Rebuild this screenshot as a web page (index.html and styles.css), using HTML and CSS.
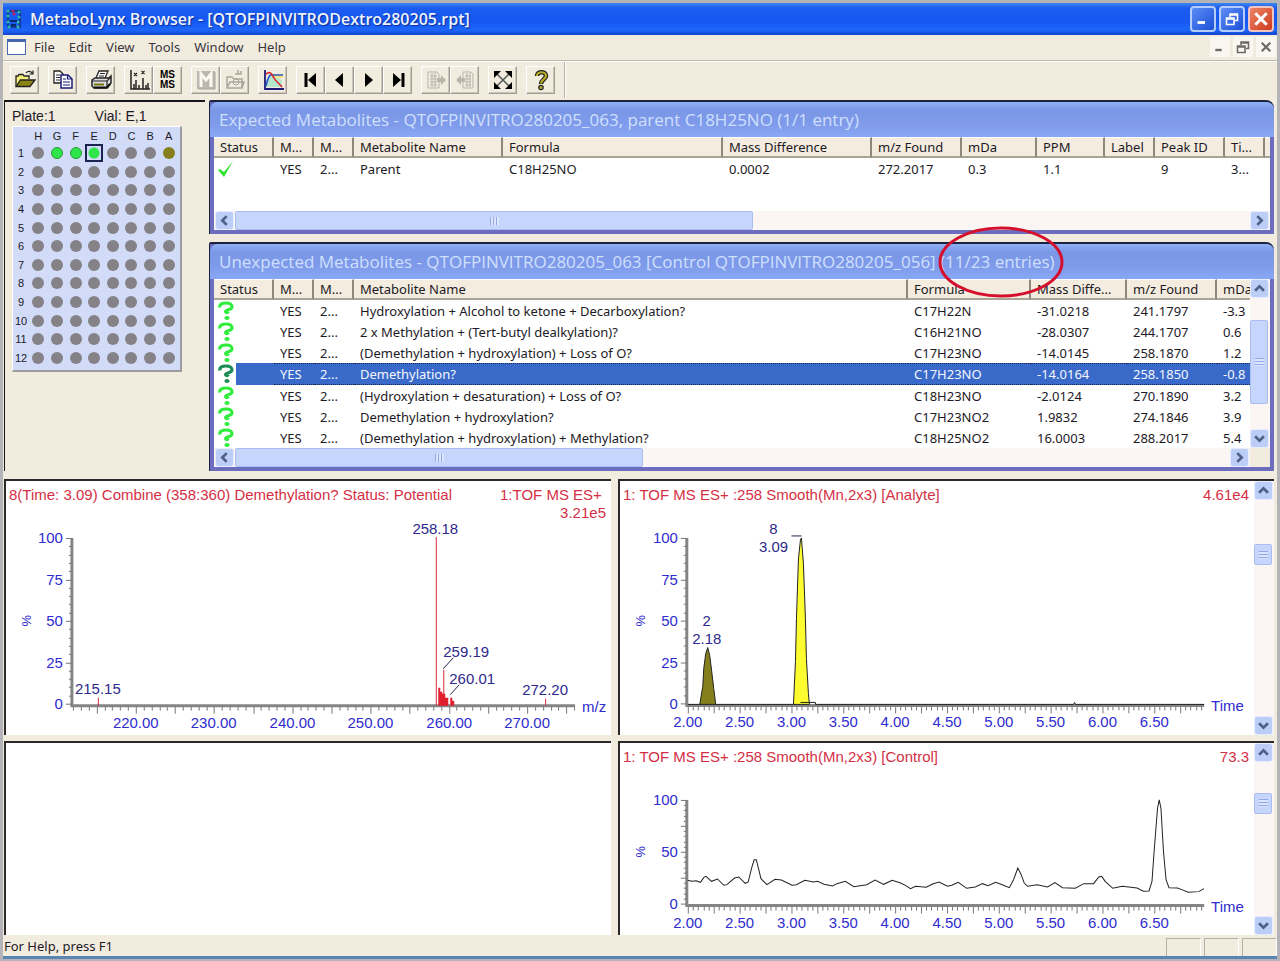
FILE: index.html
```html
<!DOCTYPE html>
<html lang="en">
<head>
    <meta charset="UTF-8">
    <meta name="viewport" content="width=device-width, initial-scale=1.0">
    <title>MetaboLynx Browser</title>
    <link rel="stylesheet" href="styles.css">
</head>
<body>
    <!-- shared symbols -->
    <svg class="symbols" width="0" height="0" aria-hidden="true">
        <symbol id="left" viewBox="0 0 10 10"><path d="M7 1L3 5L7 9" fill="none" stroke="#4d6185" stroke-width="2.4"/></symbol>
        <symbol id="right" viewBox="0 0 10 10"><path d="M3 1L7 5L3 9" fill="none" stroke="#4d6185" stroke-width="2.4"/></symbol>
        <symbol id="up" viewBox="0 0 10 10"><path d="M1 7L5 3L9 7" fill="none" stroke="#4d6185" stroke-width="2.4"/></symbol>
        <symbol id="down" viewBox="0 0 10 10"><path d="M1 3L5 7L9 3" fill="none" stroke="#4d6185" stroke-width="2.4"/></symbol>
        <symbol id="query" viewBox="0 0 18 20"><path d="M2.800 6.500C2.500 3 5.500 2 9 2C12.500 2 15 3.500 15 6C15 9 9 8.500 8.500 10.500C8.500 12 11 11.500 11.500 12.500" fill="none" stroke="currentColor" stroke-width="3.200"/><ellipse cx="10" cy="17" rx="2.600" ry="2" fill="currentColor"/></symbol>
        <symbol id="restore" viewBox="0 0 14 14"><path d="M5 5V2H12.500V8.500H10M5 3H12" fill="none" stroke="currentColor" stroke-width="1.600"/><path d="M1.500 6H9V12.500H1.500ZM1.500 7H9" fill="none" stroke="currentColor" stroke-width="1.600"/></symbol>
        <symbol id="close" viewBox="0 0 14 14"><path d="M2 2L12 12M12 2L2 12" stroke="currentColor" stroke-width="2.600"/></symbol>
        <symbol id="minimize" viewBox="0 0 14 14"><path d="M1.500 10.500H9" stroke="currentColor" stroke-width="2.800"/></symbol>
    </svg>

    <div class="window">
        <header class="titlebar">
            <svg class="app-icon" width="16" height="20" viewBox="0 0 16 20" aria-hidden="true">
                <path d="M2 2H14V18H2Z" fill="none" stroke="#123a8c" stroke-width="2"/>
                <g fill="#2bb8a6"><circle cx="2" cy="2" r="1.600"/><circle cx="2" cy="7" r="1.600"/><circle cx="2" cy="13" r="1.600"/><circle cx="3" cy="18" r="1.600"/><circle cx="13" cy="3" r="1.600"/><circle cx="13" cy="8" r="1.600"/><circle cx="12" cy="13" r="1.600"/><circle cx="12" cy="18" r="1.600"/></g>
                <g fill="#b02a55"><circle cx="7" cy="2" r="1.500"/><circle cx="8" cy="5" r="1.500"/></g>
                <path d="M4 12H11M5 16H10" stroke="#062a66" stroke-width="2"/>
            </svg>
            <h1>MetaboLynx Browser - [QTOFPINVITRODextro280205.rpt]</h1>
            <div class="window-buttons">
                <button type="button" aria-label="Minimize"><svg width="14" height="14"><use href="#minimize"/></svg></button>
                <button type="button" aria-label="Restore"><svg width="14" height="14"><use href="#restore"/></svg></button>
                <button type="button" class="close" aria-label="Close"><svg width="16" height="16"><use href="#close"/></svg></button>
            </div>
        </header>

        <nav class="menubar">
            <span class="doc-icon"></span>
            <button type="button">File</button>
            <button type="button">Edit</button>
            <button type="button">View</button>
            <button type="button">Tools</button>
            <button type="button">Window</button>
            <button type="button">Help</button>
            <div class="child-buttons">
                <button type="button" aria-label="Minimize child"><svg width="12" height="12"><use href="#minimize"/></svg></button>
                <button type="button" aria-label="Restore child"><svg width="14" height="14"><use href="#restore"/></svg></button>
                <button type="button" aria-label="Close child"><svg width="12" height="12"><use href="#close"/></svg></button>
            </div>
        </nav>

        <div class="toolbar">
            <div class="group">
                <button type="button" aria-label="Open">
                    <svg viewBox="0 0 22 22"><path d="M2 17V7H4L5 5.500H9L10 7H15V10" fill="#f4ef7a" stroke="#222" stroke-width="1.300"/><path d="M2 17.500L6.500 11H21L16 17.500Z" fill="#8a8412" stroke="#222" stroke-width="1.300"/><path d="M12 4C14 1.500 17 2 18.500 4.500M19 1.500V5H15.500" fill="none" stroke="#222" stroke-width="1.200"/></svg>
                </button>
            </div>
            <div class="group">
                <button type="button" aria-label="Copy">
                    <svg viewBox="0 0 22 22"><path d="M2 2H8L11 5V14H2Z" fill="#fff" stroke="#222" stroke-width="1.300"/><path d="M4 6H8M4 8.500H8M4 11H8" stroke="#333"/><path d="M9 6H16L20 10V19H9Z" fill="#fff" stroke="#1c1c78" stroke-width="1.500"/><path d="M15.500 6V10H20M11 10H14M11 13H18M11 16H18" fill="none" stroke="#1c1c78" stroke-width="1.200"/></svg>
                </button>
            </div>
            <div class="group">
                <button type="button" aria-label="Print">
                    <svg viewBox="0 0 22 22"><path d="M6 9L9 2H18L15 9" fill="#fff" stroke="#222" stroke-width="1.300"/><path d="M10 4.500H15M9 7H14" stroke="#222"/><path d="M2 11L5 9H19L21 7V14L17 19H4L2 17Z" fill="#ddd" stroke="#222" stroke-width="1.500"/><path d="M2 12H17L21 8M17 12V18" fill="none" stroke="#222" stroke-width="1.200"/><path d="M4 15.500H14" stroke="#777408" stroke-width="2"/><path d="M4 18.500H17L20 15" fill="none" stroke="#111" stroke-width="2"/></svg>
                </button>
            </div>
            <div class="group">
                <button type="button" aria-label="Spectrum">
                    <svg viewBox="0 0 22 22"><path d="M3 1V20H22M6 20V15M8 20V11M11 20V16M15 20V9M18 20V16M20 20V14" fill="none" stroke="#222" stroke-width="1.500"/><path d="M6 4L9 7M9 4L6 7M13.500 2L16.500 5M16.500 2L13.500 5" stroke="#222" stroke-width="1.100"/></svg>
                </button>
                <button type="button" aria-label="MS MS" class="msms"><span>MS</span><span>MS</span></button>
            </div>
            <div class="group">
                <button type="button" aria-label="MassLynx" disabled>
                    <svg viewBox="0 0 22 22"><path d="M2 2H20V20H2Z" fill="#bdb8ae"/><path d="M6 18V5L11 11L16 5V18" fill="none" stroke="#fbf8f2" stroke-width="3"/><path d="M3 20H20V3" fill="none" stroke="#aaa69c"/></svg>
                </button>
                <button type="button" aria-label="Open result" disabled>
                    <svg viewBox="0 0 22 22"><path d="M3 19V8H8L10 10H18V19ZM3 19L6 13H20L18 19M11 5H17V2M14 5V1" fill="none" stroke="#aaa69c" stroke-width="1.500"/><circle cx="12" cy="13" r="3" fill="none" stroke="#aaa69c"/></svg>
                </button>
            </div>
            <div class="group">
                <button type="button" aria-label="Chromatogram">
                    <svg viewBox="0 0 22 22"><path d="M3 12L9 6L20 11V18H3Z" fill="#b6e8d0"/><path d="M11 5H21V9H13Z" fill="#f1e780"/><path d="M3 1V20H22" fill="none" stroke="#1c1c78" stroke-width="1.800"/><path d="M4 17C7 5 8 5 12 6H21" fill="none" stroke="#2d55c8" stroke-width="1.600"/><path d="M4 5C8 2 9 4 12 9C14 13 18 15 20 18" fill="none" stroke="#d8262c" stroke-width="1.600"/></svg>
                </button>
            </div>
            <div class="group">
                <button type="button" aria-label="First"><svg viewBox="0 0 22 22"><path d="M6 4V18" stroke="#000" stroke-width="3"/><path d="M16 4V18L8 11Z"/></svg></button>
                <button type="button" aria-label="Previous"><svg viewBox="0 0 22 22"><path d="M14 4V18L6 11Z"/></svg></button>
                <button type="button" aria-label="Next"><svg viewBox="0 0 22 22"><path d="M7 4V18L15 11Z"/></svg></button>
                <button type="button" aria-label="Last"><svg viewBox="0 0 22 22"><path d="M16 4V18" stroke="#000" stroke-width="3"/><path d="M6 4V18L14 11Z"/></svg></button>
            </div>
            <div class="group">
                <button type="button" aria-label="Export list" disabled>
                    <svg viewBox="0 0 22 22"><path d="M3 3H12L14 5V19H3ZM5 7H12M5 10H12M5 13H12M5 16H12M7 4V18M10 4V18" fill="none" stroke="#b9b5aa"/><path d="M12 9H16V6L21 11L16 16V13H12Z" fill="#b9b5aa"/></svg>
                </button>
                <button type="button" aria-label="Import list" disabled>
                    <svg viewBox="0 0 22 22"><path d="M9 3H17L19 5V19H9ZM11 7H17M11 10H17M11 13H17M11 16H17M13 4V18M16 4V18" fill="none" stroke="#b9b5aa"/><path d="M11 9H7V6L2 11L7 16V13H11Z" fill="#b9b5aa"/></svg>
                </button>
            </div>
            <div class="group">
                <button type="button" aria-label="Full extent">
                    <svg viewBox="0 0 22 22"><path d="M4 4L18 18M18 4L4 18" stroke="#555" stroke-width="1.500"/><path d="M2 2H9L2 9ZM20 2H13L20 9ZM2 20H9L2 13ZM20 20H13L20 13Z"/></svg>
                </button>
            </div>
            <div class="group">
                <button type="button" aria-label="Help topics">
                    <svg viewBox="0 0 22 22"><path d="M7 7C7 2 16 2 16 7C16 10 11 11 11 15" fill="none" stroke="#222" stroke-width="4.600"/><path d="M7 7C7 2 16 2 16 7C16 10 11 11 11 14.500" fill="none" stroke="#b9ad28" stroke-width="2.200"/><circle cx="11" cy="18.500" r="2.200" fill="#b9ad28" stroke="#222" stroke-width="1.200"/></svg>
                </button>
            </div>
            <span class="divider"></span>
        </div>

        <main>
            <section class="top">
                <aside class="plate-panel">
                    <p class="plate-info"><span>Plate:1</span><span>Vial: E,1</span></p>
                    <div class="plate" id="plate"></div>
                </aside>

                <div class="lists">
                    <section class="list-panel">
                        <h2>Expected Metabolites - QTOFPINVITRO280205_063, parent C18H25NO (1/1 entry)</h2>
                        <div class="list expected">
                            <table>
                                <colgroup><col class="w-status"><col class="w-m"><col class="w-m"><col class="w-name"><col class="w-formula"><col class="w-diff"><col class="w-found"><col class="w-mda"><col class="w-ppm"><col class="w-label"><col class="w-peak"><col class="w-time"><col></colgroup>
                                <thead>
                                    <tr><th>Status</th><th>M...</th><th>M...</th><th>Metabolite Name</th><th>Formula</th><th>Mass Difference</th><th>m/z Found</th><th>mDa</th><th>PPM</th><th>Label</th><th>Peak ID</th><th>Ti...</th><th></th></tr>
                                </thead>
                                <tbody>
                                    <tr><td class="status"><svg width="20" height="20" viewBox="0 0 20 20"><path d="M1 11L3 10L7 13L16 2L7 18Z" fill="#2ee22e"/></svg></td><td>YES</td><td>2...</td><td>Parent</td><td>C18H25NO</td><td>0.0002</td><td>272.2017</td><td>0.3</td><td>1.1</td><td></td><td>9</td><td>3...</td><td></td></tr>
                                </tbody>
                            </table>
                        </div>
                        <div class="hscroll">
                            <button type="button" aria-label="Scroll left"><svg width="11" height="11"><use href="#left"/></svg></button>
                            <div class="track"><div class="thumb" style="width: 51%"></div></div>
                            <button type="button" aria-label="Scroll right"><svg width="11" height="11"><use href="#right"/></svg></button>
                        </div>
                    </section>

                    <section class="list-panel">
                        <h2>Unexpected Metabolites - QTOFPINVITRO280205_063 [Control QTOFPINVITRO280205_056] <span class="marked">(11/23 entries)<svg class="ring" width="126" height="74" viewBox="0 0 126 74" aria-hidden="true"><ellipse cx="63" cy="37" rx="61" ry="34" fill="none" stroke="#d4102c" stroke-width="3"/></svg></span></h2>
                        <div class="list-row">
                            <div class="list">
                                <table>
                                    <colgroup><col class="w-status"><col class="w-m"><col class="w-m"><col><col class="w-formula2"><col class="w-diff2"><col class="w-found"><col class="w-mda2"></colgroup>
                                    <thead>
                                        <tr><th>Status</th><th>M...</th><th>M...</th><th>Metabolite Name</th><th>Formula</th><th>Mass Diffe...</th><th>m/z Found</th><th>mDa</th></tr>
                                    </thead>
                                    <tbody>
                                        <tr><td class="status"><svg width="18" height="20"><use href="#query"/></svg></td><td>YES</td><td>2...</td><td>Hydroxylation + Alcohol to ketone + Decarboxylation?</td><td>C17H22N</td><td>-31.0218</td><td>241.1797</td><td>-3.3</td></tr>
                                        <tr><td class="status"><svg width="18" height="20"><use href="#query"/></svg></td><td>YES</td><td>2...</td><td>2 x Methylation + (Tert-butyl dealkylation)?</td><td>C16H21NO</td><td>-28.0307</td><td>244.1707</td><td>0.6</td></tr>
                                        <tr><td class="status"><svg width="18" height="20"><use href="#query"/></svg></td><td>YES</td><td>2...</td><td>(Demethylation + hydroxylation) + Loss of O?</td><td>C17H23NO</td><td>-14.0145</td><td>258.1870</td><td>1.2</td></tr>
                                        <tr class="selected"><td class="status"><svg width="18" height="20"><use href="#query"/></svg></td><td>YES</td><td>2...</td><td>Demethylation?</td><td>C17H23NO</td><td>-14.0164</td><td>258.1850</td><td>-0.8</td></tr>
                                        <tr><td class="status"><svg width="18" height="20"><use href="#query"/></svg></td><td>YES</td><td>2...</td><td>(Hydroxylation + desaturation) + Loss of O?</td><td>C18H23NO</td><td>-2.0124</td><td>270.1890</td><td>3.2</td></tr>
                                        <tr><td class="status"><svg width="18" height="20"><use href="#query"/></svg></td><td>YES</td><td>2...</td><td>Demethylation + hydroxylation?</td><td>C17H23NO2</td><td>1.9832</td><td>274.1846</td><td>3.9</td></tr>
                                        <tr><td class="status"><svg width="18" height="20"><use href="#query"/></svg></td><td>YES</td><td>2...</td><td>(Demethylation + hydroxylation) + Methylation?</td><td>C18H25NO2</td><td>16.0003</td><td>288.2017</td><td>5.4</td></tr>
                                    </tbody>
                                </table>
                            </div>
                            <div class="vscroll">
                                <button type="button" aria-label="Scroll up"><svg width="11" height="11"><use href="#up"/></svg></button>
                                <div class="track"><div class="thumb" style="height: 64%; margin-top: 22px"></div></div>
                                <button type="button" aria-label="Scroll down"><svg width="11" height="11"><use href="#down"/></svg></button>
                            </div>
                        </div>
                        <div class="hscroll with-corner">
                            <button type="button" aria-label="Scroll left"><svg width="11" height="11"><use href="#left"/></svg></button>
                            <div class="track"><div class="thumb" style="width: 41%"></div></div>
                            <button type="button" aria-label="Scroll right"><svg width="11" height="11"><use href="#right"/></svg></button>
                        </div>
                    </section>
                </div>
            </section>

            <section class="plots">
                <section class="plot">
                    <div class="plot-body">
                        <div class="plot-head">
                            <span>8(Time: 3.09) Combine (358:360) Demethylation? Status: Potential</span>
                            <span class="scale"><span>1:TOF MS ES+&nbsp;</span><span>3.21e5</span></span>
                        </div>
                        <svg class="chart" id="spectrum" viewBox="0 0 606 214">
                            <g class="peaks">
                                <path d="M92.500 179V187M431 18V187M438.500 151V187M540.500 180V187"/>
                                <path d="M433 187V169H435V173H437V175H440V179H443V187ZM445 187V179H447V182H449V187Z" class="solid"/>
                            </g>
                            <path class="leader" d="M438 150L448 139M445 176L454 166"/>
                            <g class="peak-labels">
                                <text x="430" y="15" text-anchor="middle">258.18</text>
                                <text x="438" y="138">259.19</text>
                                <text x="444" y="165">260.01</text>
                                <text x="540" y="176" text-anchor="middle">272.20</text>
                                <text x="92" y="175" text-anchor="middle">215.15</text>
                            </g>
                        </svg>
                    </div>
                </section>

                <section class="plot">
                    <div class="plot-body">
                        <div class="plot-head">
                            <span>1: TOF MS ES+ :258 Smooth(Mn,2x3) [Analyte]</span>
                            <span class="scale">4.61e4</span>
                        </div>
                        <svg class="chart" id="analyte" viewBox="0 0 636 214">
                            <path class="olive" d="M80 186L83 168L84 150L86 135L88 129L90 137L92 153L94 170L96 186Z"/>
                            <path class="yellow" d="M174 186L176 143L177 100L179 40L181 21L182 19L184 45L186 100L187 140L189 175L190 186Z"/>
                            <path class="trace" d="M68 186H80M96 186H174M181 184H196V186H455L456 184L457 186H586"/>
                            <path class="leader" d="M172 17H182"/>
                            <g class="peak-labels">
                                <text x="154" y="15" text-anchor="middle">8</text>
                                <text x="154" y="33" text-anchor="middle">3.09</text>
                                <text x="87" y="107" text-anchor="middle">2</text>
                                <text x="87" y="125" text-anchor="middle">2.18</text>
                            </g>
                        </svg>
                    </div>
                    <div class="vscroll">
                        <button type="button" aria-label="Scroll up"><svg width="11" height="11"><use href="#up"/></svg></button>
                        <div class="track"><div class="thumb small" style="margin-top: 44px"></div></div>
                        <button type="button" aria-label="Scroll down"><svg width="11" height="11"><use href="#down"/></svg></button>
                    </div>
                </section>

                <section class="plot"></section>

                <section class="plot">
                    <div class="plot-body">
                        <div class="plot-head">
                            <span>1: TOF MS ES+ :258 Smooth(Mn,2x3) [Control]</span>
                            <span class="scale">73.3</span>
                        </div>
                        <svg class="chart" id="control" viewBox="0 0 636 153">
                            <g transform="translate(-9 -46) scale(.4273 .3333)">
                                <polyline class="trace" vector-effect="non-scaling-stroke" points="180,437 190,440 200,438 210,443 218,428 223,425 236,440 250,433 265,452 272,450 290,430 300,427 315,446 322,442 330,400 336,375 341,375 346,400 352,432 366,450 385,434 400,436 425,452 435,450 455,437 475,442 485,440 500,449 520,454 530,447 550,440 570,456 600,450 620,436 640,449 660,437 680,445 692,453 703,462 715,455 740,458 755,448 770,442 790,455 800,452 815,443 835,461 855,457 872,447 885,453 903,443 920,451 935,459 945,435 955,400 963,420 970,445 978,455 1000,450 1025,457 1042,444 1060,459 1090,461 1110,447 1133,447 1145,427 1152,425 1160,440 1178,461 1200,455 1235,460 1250,470 1263,469 1270,440 1275,350 1283,220 1287,195 1291,220 1297,350 1303,435 1310,459 1330,460 1340,465 1355,473 1380,471 1392,462"/>
                            </g>
                        </svg>
                    </div>
                    <div class="vscroll">
                        <button type="button" aria-label="Scroll up"><svg width="11" height="11"><use href="#up"/></svg></button>
                        <div class="track"><div class="thumb small" style="margin-top: 31px"></div></div>
                        <button type="button" aria-label="Scroll down"><svg width="11" height="11"><use href="#down"/></svg></button>
                    </div>
                </section>
            </section>
        </main>

        <footer class="statusbar">
            <span>For Help, press F1</span>
            <div class="panes"><i></i><i></i><i></i></div>
        </footer>
    </div>

    <script src="script.js"></script>
</body>
</html>
```
FILE: styles.css
```css
* {
    box-sizing: border-box;
}

body {
    margin: 0;
    background-color: #f2ecdf;
    font-family: "Noto Sans", "Liberation Sans", sans-serif;
    font-size: 13px;
    line-height: 16px;
    color: #1d1a26;
}

h1, h2, p {
    margin: 0;
}

button {
    padding: 0;
    border: none;
    background: none;
    font: inherit;
    color: inherit;
    display: flex;
    align-items: center;
    justify-content: center;
}

.symbols {
    position: absolute;
}

.window {
    min-height: 100vh;
    display: flex;
    flex-direction: column;
    border: 3px solid #b4b4b8;
    border-width: 3px 3px 2px 3px;
}

/* title bar */
.titlebar {
    height: 32px;
    display: flex;
    align-items: center;
    padding: 0 3px;
    background: linear-gradient(#3f86ee 0, #1c5cf0 5px, #1557f0 18px, #1e66fa 27px, #1144cc 32px);
    color: #eef4ff;
}

.titlebar h1 {
    margin-left: 8px;
    font-family: "Open Sans", sans-serif;
    font-size: 16px;
    line-height: 20px;
    font-weight: 600;
    text-shadow: 1px 1px 1px #0b2f9c;
    white-space: nowrap;
    flex: 1;
}

.window-buttons {
    display: flex;
    gap: 3px;
}

.window-buttons button {
    width: 26px;
    height: 26px;
    border: 2px solid #b4cdfa;
    border-radius: 4px;
    background: linear-gradient(135deg, #5c8df5, #1c50d8);
    color: #fff;
}

.window-buttons .close {
    border-color: #f0c4c0;
    background: linear-gradient(135deg, #ee8468, #cc3a1c);
}

/* menu */
.menubar {
    height: 26px;
    display: flex;
    align-items: center;
    gap: 14px;
    padding: 0 1px 2px 4px;
    border-bottom: 1px solid #bdb8ad;
    color: #38343c;
}

.doc-icon {
    width: 19px;
    height: 16px;
    margin-right: -6px;
    background-color: #fff;
    border: 1px solid #4468b0;
    border-top-width: 3px;
}

.child-buttons {
    margin-left: auto;
    display: flex;
    gap: 3px;
}

.child-buttons button {
    width: 20px;
    height: 20px;
    background-color: #faf7f1;
    color: #6e6a68;
}

/* toolbar */
.toolbar {
    height: 39px;
    display: flex;
    align-items: center;
    gap: 9px;
    padding: 0 7px 2px;
    border-top: 1px solid #fff;
}

.group {
    display: flex;
}

.group button {
    width: 29px;
    height: 28px;
    border: 1px solid;
    border-color: #fff #a29d93 #a29d93 #fff;
    box-shadow: inset -1px -1px #cbc5b9;
}

.group svg {
    width: 22px;
    height: 22px;
}

.group .msms {
    flex-direction: column;
    font-family: "Liberation Sans", sans-serif;
    font-weight: 700;
    font-size: 10px;
    line-height: 10px;
    color: #000;
}

.divider {
    align-self: stretch;
    width: 2px;
    border-left: 1px solid #b5b0a5;
    border-right: 1px solid #fff;
}

/* work area */
main {
    flex: 1;
    display: flex;
    flex-direction: column;
    gap: 8px;
    padding: 0 3px 0 1px;
}

.top {
    display: flex;
    gap: 4px;
}

.plate-panel {
    width: 201px;
    flex: none;
    border-top: 2px solid #15151c;
    border-left: 1px solid #15151c;
    padding: 6px 7px;
}

.plate-info {
    display: flex;
    gap: 39px;
    margin-bottom: 2px;
    font-family: "Liberation Sans", Arial, sans-serif;
    font-size: 14px;
}

.plate {
    width: 170px;
    height: 246px;
    display: grid;
    grid-template-columns: 16px repeat(8, 1fr);
    grid-template-rows: 17px repeat(12, 1fr);
    align-items: center;
    justify-items: center;
    padding: 0 2px 3px 0;
    background-color: #d2dbf8;
    border: 1px solid #fff;
    border-right: 2px solid #9b9ba0;
    border-bottom: 2px solid #9b9ba0;
    font-family: "Liberation Sans", Arial, sans-serif;
    font-size: 11px;
    line-height: 12px;
}

.well {
    width: 12px;
    height: 12px;
    border-radius: 50%;
    background-color: #858287;
}

.well.done {
    background-color: #2fe54c;
    border: 1px solid #2a9a3a;
}

.well.pending {
    background-color: #85801c;
}

.well.current {
    outline: 2px solid #1b2350;
    outline-offset: 1px;
    border-radius: 0;
    background: radial-gradient(circle, #2fe54c 5px, #d2dbf8 6px);
}

/* metabolite lists */
.lists {
    flex: 1;
    min-width: 0;
    display: flex;
    flex-direction: column;
    gap: 8px;
}

.list-panel {
    border-top: 2px solid #1b2340;
    border-left: 1px solid #1b2340;
    background-color: #6d6dc0;
    padding: 0 4px 4px;
    border-radius: 2px 8px 0 0;
}

.list-panel h2 {
    height: 35px;
    margin: 0 -4px;
    padding: 9px 9px;
    border-radius: 8px 8px 0 0;
    background: linear-gradient(#8fb2f6 0, #7a97e6 8px, #7f9aea 22px, #88a8f4 35px);
    font-family: "Open Sans", sans-serif;
    font-size: 17px;
    line-height: 18px;
    font-weight: 500;
    color: #cfe0fd;
    white-space: nowrap;
}

.marked {
    position: relative;
}

.ring {
    position: absolute;
    left: -2px;
    top: -25px;
    z-index: 2;
}

.list {
    flex: 1;
    min-width: 0;
    overflow: hidden;
    background-color: #fff;
}

.expected {
    height: 74px;
}

.list-row {
    display: flex;
}

table {
    width: 100%;
    table-layout: fixed;
    border-collapse: separate;
    border-spacing: 0;
}

th, td {
    height: 21px;
    padding: 0 0 0 6px;
    text-align: left;
    font-weight: 400;
    white-space: nowrap;
    overflow: hidden;
}

th {
    background-color: #f3ecdf;
    border-top: 1px solid #fff;
    border-right: 2px solid #8d887e;
    border-bottom: 2px solid #aaa497;
}

th:last-child {
    border-right: none;
}

.status {
    padding-left: 3px;
    color: #30ec3c;
}

.status svg {
    display: block;
}

.selected td {
    background-color: #3a6ac9;
    border-top: 1px dotted #16294f;
    border-bottom: 1px dotted #16294f;
    color: #f4f7ff;
}

.selected .status {
    color: #1c8c56;
    background: linear-gradient(to right, #fff 22px, #3a6ac9 22px);
    border-color: transparent;
}

.w-status { width: 60px; }
.w-m { width: 40px; }
.w-name { width: 149px; }
.w-formula { width: 220px; }
.w-diff { width: 149px; }
.w-found { width: 90px; }
.w-mda { width: 75px; }
.w-ppm { width: 68px; }
.w-label { width: 50px; }
.w-peak { width: 70px; }
.w-time { width: 40px; }
.w-formula2 { width: 123px; }
.w-diff2 { width: 96px; }
.w-mda2 { width: 33px; }

/* scroll bars */
.hscroll, .vscroll {
    display: flex;
    background-color: #fbf6f3;
}

.hscroll {
    height: 19px;
    padding: 0 1px;
}

.with-corner {
    border-right: 20px solid #f2ecdf;
}

.vscroll {
    width: 20px;
    flex: none;
    flex-direction: column;
}

.hscroll button, .vscroll button {
    width: 19px;
    height: 19px;
    flex: none;
    border: 1px solid #e6edff;
    border-radius: 3px;
    background-color: #bccdf8;
}

.track {
    flex: 1;
}

.thumb {
    border: 1px solid #a9bdf0;
    border-radius: 2px;
    background-color: #c6d5fc;
    position: relative;
}

.hscroll .thumb {
    height: 19px;
    margin-left: 1px;
}

.vscroll .thumb {
    width: 18px;
}

.vscroll .small {
    height: 21px;
}

/* grip lines in the middle of the thumb */
.thumb::after {
    content: "";
    position: absolute;
    inset: 0;
    margin: auto;
    width: 9px;
    height: 8px;
    background: repeating-linear-gradient(to right, #93a9e4 0 1px, #dbe5ff 1px 3px);
}

.vscroll .thumb::after {
    background: repeating-linear-gradient(#93a9e4 0 1px, #dbe5ff 1px 3px);
}

/* plots */
.plots {
    flex: 1;
    display: grid;
    grid-template-columns: 607fr 656fr;
    gap: 6px 7px;
}

.plot {
    min-width: 0;
    display: flex;
    background-color: #fff;
    border-top: 2px solid #2a2828;
    border-left: 2px solid #2a2828;
}

.plot-body {
    flex: 1;
    min-width: 0;
}

.plot-head {
    height: 38px;
    display: flex;
    justify-content: space-between;
    padding: 5px 5px 0 3px;
    font-family: "Liberation Sans", Arial, sans-serif;
    font-size: 15px;
    line-height: 18px;
    color: #d42f45;
    white-space: nowrap;
}

.scale {
    display: flex;
    flex-direction: column;
    align-items: flex-end;
}

.chart {
    display: block;
    width: 100%;
    font-family: "Liberation Sans", Arial, sans-serif;
    font-size: 15px;
}

.axis-label {
    fill: #2f2cd0;
}

.peak-labels {
    fill: #2e2a8c;
}

.axis {
    fill: none;
    stroke: #858585;
    stroke-width: 3;
}

.ticks, .leader, .trace {
    fill: none;
    stroke: #777;
    stroke-width: 1;
}

.leader {
    stroke: #23234a;
}

.trace {
    stroke: #222;
}

.peaks {
    fill: none;
    stroke: #d62a38;
}

.peaks .solid {
    fill: #e0202c;
    stroke: none;
}

.olive {
    fill: #85801c;
    stroke: #222;
}

.yellow {
    fill: #fcfc30;
    stroke: #222;
}

/* status bar */
.statusbar {
    height: 24px;
    display: flex;
    justify-content: space-between;
    padding: 3px 0 0 1px;
    border-bottom: 3px solid #5a84b4;
}

.panes {
    display: flex;
    gap: 3px;
}

.panes i {
    width: 35px;
    border-top: 1px solid #b5b0a5;
    border-left: 1px solid #b5b0a5;
    border-right: 1px solid #fff;
}
```
FILE: script.js
```js
const NS = 'http://www.w3.org/2000/svg';

function add(svg, tag, attrs, text) {
    const el = document.createElementNS(NS, tag);
    for (const key in attrs) el.setAttribute(key, attrs[key]);
    if (text) el.textContent = text;
    svg.prepend(el);
}

// opts: x0/x1 axis ends, y100/y0 scale ends, yStep label step
function drawAxes(id, opts) {
    const svg = document.getElementById(id);
    const { x0, x1, y100, y0 } = opts;
    let ticks = '';

    for (let p = 0; p <= 100; p += 5) {
        const y = Math.round(y0 - (y0 - y100) * p / 100) + 0.5;
        ticks += `M${x0} ${y}H${p % 25 === 0 ? x0 - 6 : x0 - 3}`;
        if (p % opts.yStep === 0) {
            add(svg, 'text', { class: 'axis-label', x: x0 - 9, y: y + 5, 'text-anchor': 'end' }, String(p));
        }
    }

    opts.xTicks.forEach(t => {
        const x = Math.round(opts.xOrigin + t.offset);
        ticks += `M${x + 0.5} ${y0 + 3}V${t.long ? y0 + 10 : y0 + 7}`;
        if (t.label) {
            add(svg, 'text', { class: 'axis-label', x: x, y: y0 + 24, 'text-anchor': 'middle' }, t.label);
        }
    });

    add(svg, 'path', { class: 'ticks', d: ticks });
    add(svg, 'path', { class: 'axis', d: `M${x0} ${y100}V${y0 + 2}H${x1}` });
    add(svg, 'text', { class: 'axis-label', x: x1 + 7, y: y0 + 8 }, opts.unit);
    const mid = (y0 + y100) / 2;
    add(svg, 'text', {
        class: 'axis-label', x: opts.pctX, y: mid, 'font-size': 13,
        'text-anchor': 'middle', transform: `rotate(-90 ${opts.pctX} ${mid})`
    }, '%');
}

// m/z scale: one tick per unit, 7.84 px each
const mzTicks = [];
for (let m = 212; m <= 276; m++) {
    mzTicks.push({ offset: (m - 220) * 7.84, long: m % 5 === 0, label: m % 10 === 0 ? m.toFixed(2) : '' });
}

// time scale: one tick per 0.05 min, 104 px per minute
const timeTicks = [];
for (let i = 0; i < 100; i++) {
    timeTicks.push({
        offset: i * 5.2,
        long: i % 5 === 0,
        label: i % 10 === 0 ? (2 + i / 20).toFixed(2) : ''
    });
}

drawAxes('spectrum', { x0: 66, x1: 570, y100: 19, y0: 185, yStep: 25, xOrigin: 130, xTicks: mzTicks, unit: 'm/z', pctX: 25 });
drawAxes('analyte', { x0: 67, x1: 586, y100: 19, y0: 185, yStep: 25, xOrigin: 68, xTicks: timeTicks, unit: 'Time', pctX: 25 });
drawAxes('control', { x0: 67, x1: 586, y100: 19, y0: 123, yStep: 50, xOrigin: 68, xTicks: timeTicks, unit: 'Time', pctX: 25 });

// vial plate
const plate = document.getElementById('plate');
const columns = ['H', 'G', 'F', 'E', 'D', 'C', 'B', 'A'];
const state = { G1: 'done', F1: 'done', E1: 'current', A1: 'pending' };

function cell(className, text) {
    const span = document.createElement('span');
    span.className = className;
    span.textContent = text || '';
    plate.appendChild(span);
}

cell('corner');
columns.forEach(c => cell('head', c));
for (let row = 1; row <= 12; row++) {
    cell('head', row);
    columns.forEach(c => cell('well ' + (state[c + row] || '')));
}
```
